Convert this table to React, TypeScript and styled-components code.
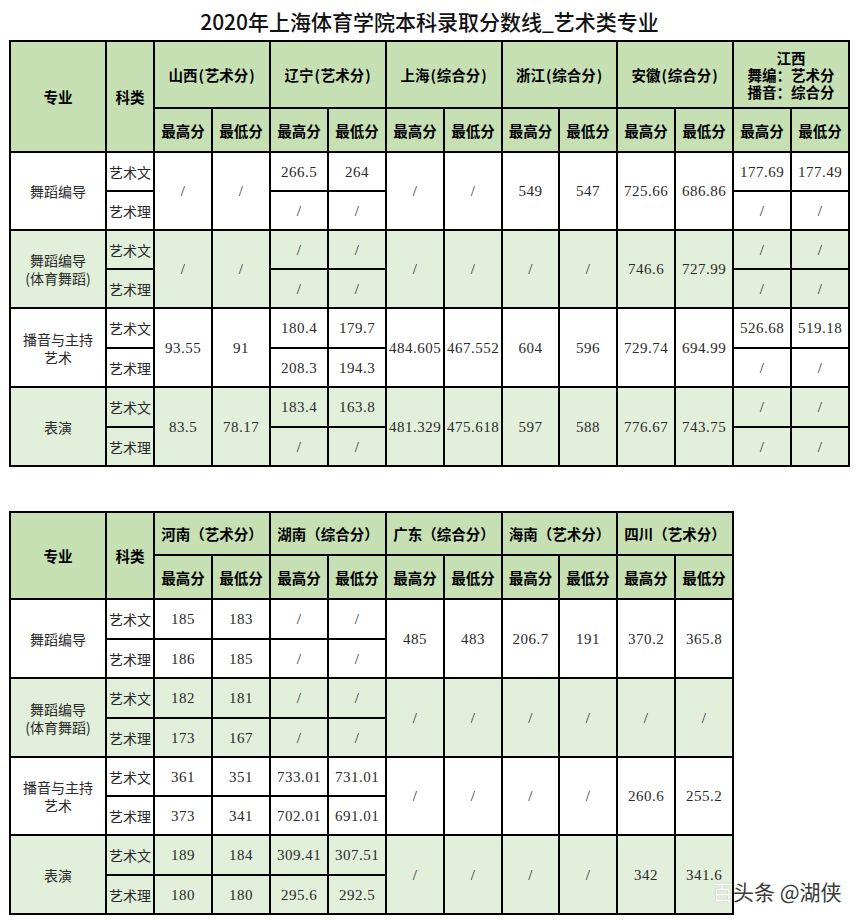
import React from "react";
import styled, { createGlobalStyle } from "styled-components";

const GlobalStyle = createGlobalStyle`
  html, body { margin: 0; padding: 0; background: #fff; }
  body { font-family: "Noto Sans CJK SC", "Noto Sans", sans-serif; }
`;

const Page = styled.div`
  position: relative;
  width: 866px;
  height: 922px;
  padding-left: 9px;
  box-sizing: border-box;
  overflow: hidden;
`;

const Title = styled.h1`
  margin: 0;
  width: 841px;
  height: 40px;
  line-height: 42px;
  text-align: center;
  font-size: 21px;
  font-weight: 500;
  color: #111;
`;

const Sheet = styled.table<{ $gap: number }>`
  border-collapse: collapse;
  table-layout: fixed;
  margin-top: ${(p) => p.$gap}px;
`;

const Row = styled.tr<{ $h: number }>`
  height: ${(p) => p.$h}px;
`;

const Head = styled.th`
  border: 2px solid #000;
  background: #c6e0b4;
  font: 700 14.5px/17px "Noto Sans CJK SC", sans-serif;
  color: #000;
  text-align: center;
  vertical-align: middle;
  padding: 0;
  white-space: pre-line;
`;

const Paren = styled.span`
  display: inline-block;
  width: 0.5em;
  text-align: center;
`;

const Cell = styled.td<{ $tint: boolean; $kind: "num" | "label" | "type" }>`
  border: 2px solid #000;
  background: ${(p) => (p.$tint ? "#e2efda" : "#ffffff")};
  color: #2a2a2a;
  text-align: center;
  vertical-align: middle;
  padding: 0;
  white-space: pre-line;
  font: ${(p) =>
    p.$kind === "num"
      ? `400 15px/18px "Liberation Serif", "Noto Sans CJK SC", serif`
      : `400 14px/18px "Noto Sans CJK SC", sans-serif`};
  letter-spacing: ${(p) => (p.$kind === "num" ? "0.5px" : "0")};
`;

const Watermark = styled.div`
  position: absolute;
  left: 712px;
  top: 879px;
  font: 400 21px/25px "Noto Sans CJK SC", sans-serif;
  color: #3a3a3a;
  white-space: nowrap;
`;

const Faded = styled.span`
  color: #ffffff;
  text-shadow: 0 0 1px #9a9a9a;
`;

type Pair = [string, string];
type Spec = { m: Pair } | { s: [Pair, Pair] };
type Group = { name: string; tint: boolean; cells: Spec[]; h: [number, number] };

const COLS = [96, 48, 58, 58, 58, 58, 58, 58, 57, 58, 58, 58, 58, 58];

function HeadLabel({ text }: { text: string }) {
  const m = text.match(/^(.+)\((.+)\)$/);
  if (!m) return <>{text}</>;
  return (
    <>
      {m[1]}
      <Paren>(</Paren>
      {m[2]}
      <Paren>)</Paren>
    </>
  );
}

const t1Heads = ["山西(艺术分)", "辽宁(艺术分)", "上海(综合分)", "浙江(综合分)", "安徽(综合分)", "江西\n舞编：艺术分\n播音：综合分"];
const S = "/";
const t1Groups: Group[] = [
  {
    name: "舞蹈编导",
    tint: false,
    h: [39, 39],
    cells: [
      { m: [S, S] },
      { s: [["266.5", "264"], [S, S]] },
      { m: [S, S] },
      { m: ["549", "547"] },
      { m: ["725.66", "686.86"] },
      { s: [["177.69", "177.49"], [S, S]] },
    ],
  },
  {
    name: "舞蹈编导\n(体育舞蹈)",
    tint: true,
    h: [39, 39],
    cells: [
      { m: [S, S] },
      { s: [[S, S], [S, S]] },
      { m: [S, S] },
      { m: [S, S] },
      { m: ["746.6", "727.99"] },
      { s: [[S, S], [S, S]] },
    ],
  },
  {
    name: "播音与主持\n艺术",
    tint: false,
    h: [40, 39],
    cells: [
      { m: ["93.55", "91"] },
      { s: [["180.4", "179.7"], ["208.3", "194.3"]] },
      { m: ["484.605", "467.552"] },
      { m: ["604", "596"] },
      { m: ["729.74", "694.99"] },
      { s: [["526.68", "519.18"], [S, S]] },
    ],
  },
  {
    name: "表演",
    tint: true,
    h: [40, 39],
    cells: [
      { m: ["83.5", "78.17"] },
      { s: [["183.4", "163.8"], [S, S]] },
      { m: ["481.329", "475.618"] },
      { m: ["597", "588"] },
      { m: ["776.67", "743.75"] },
      { s: [[S, S], [S, S]] },
    ],
  },
];

const t2Heads = ["河南（艺术分）", "湖南（综合分）", "广东（综合分）", "海南（艺术分）", "四川（艺术分）"];
const t2Groups: Group[] = [
  {
    name: "舞蹈编导",
    tint: false,
    h: [40, 39],
    cells: [
      { s: [["185", "183"], ["186", "185"]] },
      { s: [[S, S], [S, S]] },
      { m: ["485", "483"] },
      { m: ["206.7", "191"] },
      { m: ["370.2", "365.8"] },
    ],
  },
  {
    name: "舞蹈编导\n(体育舞蹈)",
    tint: true,
    h: [40, 39],
    cells: [
      { s: [["182", "181"], ["173", "167"]] },
      { s: [[S, S], [S, S]] },
      { m: [S, S] },
      { m: [S, S] },
      { m: [S, S] },
    ],
  },
  {
    name: "播音与主持\n艺术",
    tint: false,
    h: [39, 39],
    cells: [
      { s: [["361", "351"], ["373", "341"]] },
      { s: [["733.01", "731.01"], ["702.01", "691.01"]] },
      { m: [S, S] },
      { m: [S, S] },
      { m: ["260.6", "255.2"] },
    ],
  },
  {
    name: "表演",
    tint: true,
    h: [40, 39],
    cells: [
      { s: [["189", "184"], ["180", "180"]] },
      { s: [["309.41", "307.51"], ["295.6", "292.5"]] },
      { m: [S, S] },
      { m: [S, S] },
      { m: ["342", "341.6"] },
    ],
  },
];

function ScoreTable({
  heads,
  groups,
  headH,
  gap,
}: {
  heads: string[];
  groups: Group[];
  headH: [number, number];
  gap: number;
}) {
  const cols = COLS.slice(0, 2 + heads.length * 2);
  return (
    <Sheet $gap={gap} style={{ width: cols.reduce((a, b) => a + b, 0) }}>
      <colgroup>
        {cols.map((w, i) => (
          <col key={i} style={{ width: w }} />
        ))}
      </colgroup>
      <thead>
        <Row $h={headH[0]}>
          <Head rowSpan={2}>专业</Head>
          <Head rowSpan={2}>科类</Head>
          {heads.map((h) => (
            <Head key={h} colSpan={2}>
              <HeadLabel text={h} />
            </Head>
          ))}
        </Row>
        <Row $h={headH[1]}>
          {heads.map((h) => (
            <React.Fragment key={h}>
              <Head>最高分</Head>
              <Head>最低分</Head>
            </React.Fragment>
          ))}
        </Row>
      </thead>
      <tbody>
        {groups.map((g) => (
          <React.Fragment key={g.name}>
            <Row $h={g.h[0]}>
              <Cell rowSpan={2} $tint={g.tint} $kind="label">
                {g.name}
              </Cell>
              <Cell $tint={g.tint} $kind="type">
                艺术文
              </Cell>
              {g.cells.map((c, i) =>
                "m" in c ? (
                  <React.Fragment key={i}>
                    <Cell rowSpan={2} $tint={g.tint} $kind="num">
                      {c.m[0]}
                    </Cell>
                    <Cell rowSpan={2} $tint={g.tint} $kind="num">
                      {c.m[1]}
                    </Cell>
                  </React.Fragment>
                ) : (
                  <React.Fragment key={i}>
                    <Cell $tint={g.tint} $kind="num">
                      {c.s[0][0]}
                    </Cell>
                    <Cell $tint={g.tint} $kind="num">
                      {c.s[0][1]}
                    </Cell>
                  </React.Fragment>
                )
              )}
            </Row>
            <Row $h={g.h[1]}>
              <Cell $tint={g.tint} $kind="type">
                艺术理
              </Cell>
              {g.cells.map((c, i) =>
                "s" in c ? (
                  <React.Fragment key={i}>
                    <Cell $tint={g.tint} $kind="num">
                      {c.s[1][0]}
                    </Cell>
                    <Cell $tint={g.tint} $kind="num">
                      {c.s[1][1]}
                    </Cell>
                  </React.Fragment>
                ) : null
              )}
            </Row>
          </React.Fragment>
        ))}
      </tbody>
    </Sheet>
  );
}

export default function App() {
  return (
    <>
      <GlobalStyle />
      <Page>
        <Title>2020年上海体育学院本科录取分数线_艺术类专业</Title>
        <ScoreTable heads={t1Heads} groups={t1Groups} headH={[67, 44]} gap={0} />
        <ScoreTable heads={t2Heads} groups={t2Groups} headH={[43, 44]} gap={44} />
        <Watermark>
          <Faded>百</Faded>头条 @湖侠
        </Watermark>
      </Page>
    </>
  );
}
